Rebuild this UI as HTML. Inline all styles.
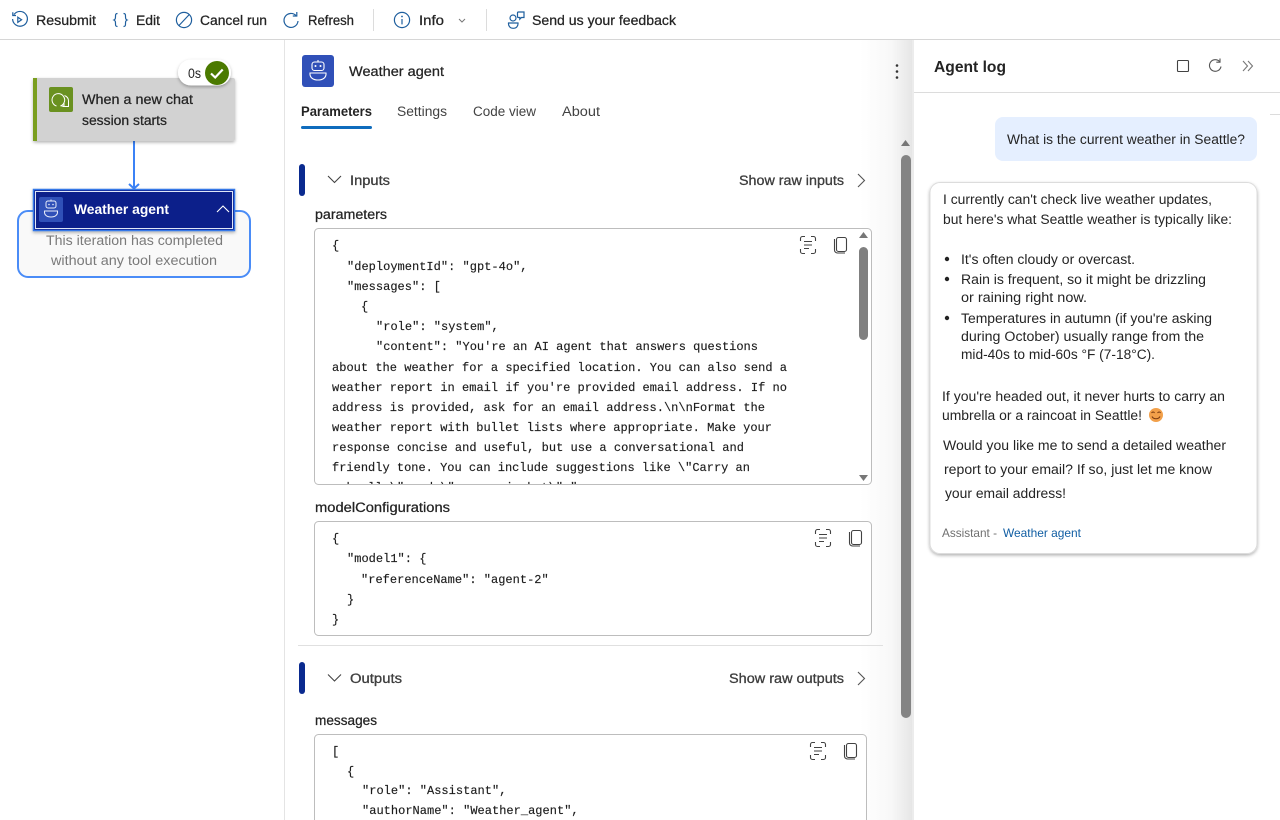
<!DOCTYPE html>
<html><head><meta charset="utf-8"><title>Weather agent</title>
<style>
html,body{margin:0;padding:0;background:#fff;width:1280px;height:820px;overflow:hidden}
svg{display:block}
text{font-family:"Liberation Sans",sans-serif;font-size:13.5px;fill:#242424;white-space:pre}
.m{stroke:#242424;stroke-width:.25px}
.b{font-weight:bold}
.c{font-family:"Liberation Mono",monospace;font-size:12px;fill:#1c1c1c;letter-spacing:.02px;stroke:#1c1c1c;stroke-width:.15px}
.i{fill:none;stroke:#424242;stroke-width:1.1}
.t{fill:none;stroke:#1f5f9e;stroke-width:1.2}
</style></head><body>
<svg width="1280" height="820" viewBox="0 0 1280 820" xmlns="http://www.w3.org/2000/svg">
<defs>
<linearGradient id="g" x1="0" x2="1" y1="0" y2="0"><stop offset="0" stop-color="#fff"/><stop offset=".6" stop-color="#f8f8f8"/><stop offset="1" stop-color="#e6e6e6"/></linearGradient>
<filter id="s" x="-10%" y="-10%" width="120%" height="125%"><feDropShadow dx="0" dy="1.5" stdDeviation="1.5" flood-color="#000" flood-opacity=".3"/></filter>
<clipPath id="c1"><rect x="315" y="229" width="540" height="255"/></clipPath>
</defs>

<!-- toolbar -->
<rect x="0" y="39" width="1280" height="1" fill="#d6d6d6"/>
<rect x="373" y="9" width="1" height="22" fill="#dcdcdc"/><rect x="486" y="9" width="1" height="22" fill="#dcdcdc"/>
<g class="t">
<path d="M14 14.500A7.400 7.400 0 1 1 12.600 19"/><path d="M12.800 12.300v3.200h3.200"/><path d="M17.800 17.200l3.800 2.600-3.800 2.600z"/>
<path d="M117.500 13.500c-2 0-2 1-2 2.800s0 3-1.600 3.700c1.600.7 1.600 1.900 1.600 3.700s0 2.800 2 2.800M123.500 13.500c2 0 2 1 2 2.800s0 3 1.600 3.700c-1.600.7-1.600 1.900-1.600 3.700s0 2.800-2 2.800"/>
<circle cx="184" cy="20" r="7.600"/><path d="M179 25.500L189.200 14.600"/>
<path d="M296 15.500A7 7 0 1 0 298 21"/><path d="M296.800 12v4h-4"/>
<circle cx="402" cy="20" r="7.600"/><path d="M402 19v5.400"/>
<path d="M459 19l3 3 3-3" stroke="#777" stroke-width="1"/>
<circle cx="513" cy="18" r="3"/><path d="M518.500 12h5.500v5.500h-2.500l-1.700 1.700v-1.700h-1.300a1 1 0 0 1-1-1V13a1 1 0 0 1 1-1z"/><path d="M508.500 23h9.500c.3 3.200-1.700 5.300-4.700 5.300s-5.100-2.100-4.800-5.300z"/>
</g>
<circle cx="402" cy="16.500" r=".9" fill="#1f5f9e"/>
<text class="m" x="36" y="25" textLength="60" lengthAdjust="spacingAndGlyphs">Resubmit</text>
<text class="m" x="136" y="25" textLength="24" lengthAdjust="spacingAndGlyphs">Edit</text>
<text class="m" x="200" y="25" textLength="67" lengthAdjust="spacingAndGlyphs">Cancel run</text>
<text class="m" x="308" y="25" textLength="46" lengthAdjust="spacingAndGlyphs">Refresh</text>
<text class="m" x="419" y="25" textLength="25" lengthAdjust="spacingAndGlyphs">Info</text>
<text class="m" x="532" y="25" textLength="144" lengthAdjust="spacingAndGlyphs">Send us your feedback</text>

<!-- left canvas -->
<rect x="284" y="40" width="1" height="780" fill="#e4e4e4"/>
<rect x="18" y="211" width="232" height="66" rx="10" fill="#f9f9f9" stroke="#4a8cf7" stroke-width="2"/>
<path d="M134 141v46" stroke="#3b82f6" stroke-width="2" fill="none"/><path d="M129 184l5 4.500 5-4.500" stroke="#3b82f6" stroke-width="2" fill="none"/>
<rect x="33" y="78" width="202" height="63" rx="2" fill="#d2d2d2" filter="url(#s)"/>
<rect x="33" y="78" width="4" height="63" fill="#7a9e1f"/>
<rect x="49" y="87" width="24" height="25" rx="2" fill="#6a9120"/>
<path d="M56.500 106a6.300 6.300 0 1 1 4-.1l3.500.1v-3.500" fill="none" stroke="#fff" stroke-width="1"/><path d="M64.500 95.500c2.500 1 4 3 4 5.500v5.500h-6" fill="none" stroke="#fff" stroke-width="1"/>
<text class="m" x="82" y="104" textLength="111" lengthAdjust="spacingAndGlyphs">When a new chat</text>
<text class="m" x="82" y="125" textLength="85" lengthAdjust="spacingAndGlyphs">session starts</text>
<rect x="178" y="59.500" width="53" height="26" rx="13" fill="#fff" filter="url(#s)"/>
<text x="188" y="78" textLength="13" lengthAdjust="spacingAndGlyphs">0s</text>
<circle cx="217" cy="73" r="12" fill="#4b7a00"/><path d="M211 73.500l4.200 4 7.500-8" fill="none" stroke="#fff" stroke-width="2.200"/>
<rect x="33.500" y="189.500" width="201" height="41" fill="#0c1f8a" stroke="#3478e8" stroke-width="1.500" filter="url(#s)"/>
<rect x="35.500" y="191.500" width="197" height="37" fill="#0c1f8a" stroke="#dfe6f7" stroke-width="1"/>
<rect x="39" y="197" width="24" height="25" rx="2" fill="#3050b8"/>
<g fill="none" stroke="#e8ecfa" stroke-width="1"><rect x="46" y="201" width="10" height="7" rx="2"/><path d="M51 199.500v1.500M44.500 211h13c.5 4-2.500 6-6.500 6s-7-2-6.500-6z"/></g>
<circle cx="49" cy="204.500" r=".8" fill="#e8ecfa"/><circle cx="53" cy="204.500" r=".8" fill="#e8ecfa"/>
<text class="b" x="74" y="214" textLength="95" lengthAdjust="spacingAndGlyphs" style="fill:#fff">Weather agent</text>
<path d="M217 212l6-6 6 6" fill="none" stroke="#fff" stroke-width="1.100"/>
<text x="46" y="245" textLength="177" lengthAdjust="spacingAndGlyphs" style="fill:#7a7a7a">This iteration has completed</text>
<text x="51" y="265" textLength="166" lengthAdjust="spacingAndGlyphs" style="fill:#7a7a7a">without any tool execution</text>

<!-- middle -->
<rect x="860" y="40" width="52" height="780" fill="url(#g)"/>
<rect x="912" y="40" width="2" height="780" fill="#ececec"/>
<rect x="302" y="55" width="32" height="32" rx="3" fill="#3050b8"/>
<g fill="none" stroke="#fff" stroke-width="1.100"><rect x="312" y="62" width="12" height="8.500" rx="2.500"/><path d="M318 60v2M310 73h16c.5 4.500-3 7-8 7s-8.500-2.500-8-7z"/></g>
<circle cx="315.500" cy="66" r="1" fill="#fff"/><circle cx="320.500" cy="66" r="1" fill="#fff"/>
<text class="m" x="349" y="76" textLength="95" lengthAdjust="spacingAndGlyphs">Weather agent</text>
<circle cx="897" cy="65.500" r="1.300" fill="#333"/><circle cx="897" cy="71.500" r="1.300" fill="#333"/><circle cx="897" cy="77.500" r="1.300" fill="#333"/>
<text class="b" x="301" y="116" textLength="71" lengthAdjust="spacingAndGlyphs">Parameters</text>
<text x="397" y="116" textLength="50" lengthAdjust="spacingAndGlyphs" style="fill:#424242">Settings</text>
<text x="473" y="116" textLength="63" lengthAdjust="spacingAndGlyphs" style="fill:#424242">Code view</text>
<text x="562" y="116" textLength="38" lengthAdjust="spacingAndGlyphs" style="fill:#424242">About</text>
<rect x="301" y="126" width="71" height="3" rx="1.500" fill="#0f6cbd"/>

<rect x="299" y="164" width="6" height="32" rx="3" fill="#0a2a8f"/>
<path d="M328 176l6.500 6.500 6.500-6.500" fill="none" stroke="#424242" stroke-width="1.100"/>
<text class="m" x="350" y="185" textLength="40" lengthAdjust="spacingAndGlyphs" style="fill:#424242">Inputs</text>
<text class="m" x="739" y="185" textLength="105" lengthAdjust="spacingAndGlyphs" style="fill:#424242">Show raw inputs</text>
<path d="M858 174l6.500 6.500-6.500 6.500" fill="none" stroke="#555" stroke-width="1.100"/>
<text class="m" x="315" y="219" textLength="72" lengthAdjust="spacingAndGlyphs">parameters</text>

<rect x="314.500" y="228.500" width="557" height="256" rx="4" fill="#fff" stroke="#bdbdbd"/>
<g clip-path="url(#c1)">
<text class="c" x="332" y="249">{</text>
<text class="c" x="347" y="270">"deploymentId": "gpt-4o",</text>
<text class="c" x="347" y="290">"messages": [</text>
<text class="c" x="361" y="310">{</text>
<text class="c" x="376" y="330">"role": "system",</text>
<text class="c" x="376" y="350" textLength="382">"content": "You're an AI agent that answers questions</text>
<text class="c" x="332" y="371" textLength="455">about the weather for a specified location. You can also send a</text>
<text class="c" x="332" y="391" textLength="455">weather report in email if you're provided email address. If no</text>
<text class="c" x="332" y="411" textLength="433">address is provided, ask for an email address.\n\nFormat the</text>
<text class="c" x="332" y="431" textLength="440">weather report with bullet lists where appropriate. Make your</text>
<text class="c" x="332" y="451" textLength="412">response concise and useful, but use a conversational and</text>
<text class="c" x="332" y="471" textLength="418">friendly tone. You can include suggestions like \"Carry an</text>
<text class="c" x="332" y="491">umbrella\" and \"wear a jacket\".",</text>
</g>
<path d="M863.500 232l4.500 6h-9z" fill="#777"/><rect x="859" y="247" width="9" height="93" rx="4.500" fill="#808080"/><path d="M863.500 481l-4.500-6h9z" fill="#777"/>

<text class="m" x="315" y="512" textLength="135" lengthAdjust="spacingAndGlyphs">modelConfigurations</text>
<rect x="314.500" y="521.500" width="557" height="114" rx="4" fill="#fff" stroke="#bdbdbd"/>
<text class="c" x="332" y="542">{</text>
<text class="c" x="347" y="562">"model1": {</text>
<text class="c" x="361" y="583">"referenceName": "agent-2"</text>
<text class="c" x="347" y="603">}</text>
<text class="c" x="332" y="623">}</text>
<rect x="298" y="645" width="585" height="1" fill="#e0e0e0"/>

<rect x="299" y="662" width="6" height="32" rx="3" fill="#0a2a8f"/>
<path d="M328 674.500l6.500 6.500 6.500-6.500" fill="none" stroke="#424242" stroke-width="1.100"/>
<text class="m" x="350" y="683" textLength="52" lengthAdjust="spacingAndGlyphs" style="fill:#424242">Outputs</text>
<text class="m" x="729" y="683" textLength="115" lengthAdjust="spacingAndGlyphs" style="fill:#424242">Show raw outputs</text>
<path d="M858 672l6.500 6.500-6.500 6.500" fill="none" stroke="#555" stroke-width="1.100"/>
<text class="m" x="315" y="725" textLength="62" lengthAdjust="spacingAndGlyphs">messages</text>
<rect x="314.500" y="734.500" width="552" height="110" rx="4" fill="#fff" stroke="#bdbdbd"/>
<text class="c" x="332" y="755">[</text>
<text class="c" x="347" y="775">{</text>
<text class="c" x="362" y="794">"role": "Assistant",</text>
<text class="c" x="362" y="814">"authorName": "Weather_agent",</text>

<!-- format / copy icons -->
<g class="i"><path d="M800.500 241v-2.500a2 2 0 0 1 2-2h2.500M811 236.500h2.500a2 2 0 0 1 2 2v2.500M815.500 249v2.500a2 2 0 0 1-2 2H811M805 253.500h-2.500a2 2 0 0 1-2-2V249M804 241.500h8M804 245h8M804 248.500h5"/><path d="M834.500 239v11a3 3 0 0 0 3 3h7.500"/><rect x="836.500" y="237.500" width="10" height="14" rx="2"/></g>
<g class="i" transform="translate(15 293)"><path d="M800.500 241v-2.500a2 2 0 0 1 2-2h2.500M811 236.500h2.500a2 2 0 0 1 2 2v2.500M815.500 249v2.500a2 2 0 0 1-2 2H811M805 253.500h-2.500a2 2 0 0 1-2-2V249M804 241.500h8M804 245h8M804 248.500h5"/><path d="M834.500 239v11a3 3 0 0 0 3 3h7.500"/><rect x="836.500" y="237.500" width="10" height="14" rx="2"/></g>
<g class="i" transform="translate(10 506)"><path d="M800.500 241v-2.500a2 2 0 0 1 2-2h2.500M811 236.500h2.500a2 2 0 0 1 2 2v2.500M815.500 249v2.500a2 2 0 0 1-2 2H811M805 253.500h-2.500a2 2 0 0 1-2-2V249M804 241.500h8M804 245h8M804 248.500h5"/><path d="M834.500 239v11a3 3 0 0 0 3 3h7.500"/><rect x="836.500" y="237.500" width="10" height="14" rx="2"/></g>

<!-- main scrollbar -->
<path d="M905.500 140l4.500 6h-9z" fill="#777"/><rect x="901" y="155" width="10" height="563" rx="5" fill="#848484"/>

<!-- right panel -->
<rect x="914" y="92" width="366" height="1" fill="#dcdcdc"/>
<rect x="1270" y="114" width="10" height="1" fill="#dcdcdc"/>
<text class="b" x="934" y="72" textLength="72" lengthAdjust="spacingAndGlyphs" style="font-size:16px">Agent log</text>
<rect x="1177.500" y="60.500" width="11" height="11" rx="1" fill="none" stroke="#424242" stroke-width="1.100"/>
<g fill="none" stroke="#555" stroke-width="1.100"><path d="M1219.500 61.500a5.800 5.800 0 1 0 1.500 5"/><path d="M1220 58.500v3.700h-3.700"/></g>
<path d="M1243 61l4.500 5-4.500 5M1248 61l4.500 5-4.500 5" fill="none" stroke="#777" stroke-width="1.100"/>
<rect x="995" y="117" width="262" height="44" rx="8" fill="#e5efff"/>
<text x="1007" y="144" textLength="238" lengthAdjust="spacingAndGlyphs">What is the current weather in Seattle?</text>
<rect x="930" y="182.500" width="327" height="371" rx="10" fill="#fff" stroke="#dcdcdc" filter="url(#s)"/>
<text x="943" y="204" textLength="269" lengthAdjust="spacingAndGlyphs">I currently can't check live weather updates,</text>
<text x="943" y="224" textLength="289" lengthAdjust="spacingAndGlyphs">but here's what Seattle weather is typically like:</text>
<circle cx="947" cy="259" r="2.200" fill="#222"/><circle cx="947" cy="279" r="2.200" fill="#222"/><circle cx="947" cy="318" r="2.200" fill="#222"/>
<text x="961" y="264" textLength="174" lengthAdjust="spacingAndGlyphs">It's often cloudy or overcast.</text>
<text x="961" y="284" textLength="245" lengthAdjust="spacingAndGlyphs">Rain is frequent, so it might be drizzling</text>
<text x="961" y="302" textLength="126" lengthAdjust="spacingAndGlyphs">or raining right now.</text>
<text x="961" y="323" textLength="251" lengthAdjust="spacingAndGlyphs">Temperatures in autumn (if you're asking</text>
<text x="961" y="341" textLength="243" lengthAdjust="spacingAndGlyphs">during October) usually range from the</text>
<text x="961" y="359" textLength="194" lengthAdjust="spacingAndGlyphs">mid-40s to mid-60s °F (7-18°C).</text>
<text x="942" y="401" textLength="283" lengthAdjust="spacingAndGlyphs">If you're headed out, it never hurts to carry an</text>
<text x="942" y="420" textLength="200" lengthAdjust="spacingAndGlyphs">umbrella or a raincoat in Seattle!</text>
<circle cx="1156" cy="415" r="7" fill="#f2a04a"/><path d="M1151.500 413c1-1.300 2.300-1.300 3 0M1157.500 413c1-1.300 2.300-1.300 3 0" fill="none" stroke="#7a3a10" stroke-width="1"/><path d="M1152 416.500c1.500 3 6.500 3 8 0" fill="none" stroke="#7a3a10" stroke-width="1.100"/>
<text x="943" y="450" textLength="283" lengthAdjust="spacingAndGlyphs">Would you like me to send a detailed weather</text>
<text x="944" y="474" textLength="268" lengthAdjust="spacingAndGlyphs">report to your email? If so, just let me know</text>
<text x="945" y="498" textLength="121" lengthAdjust="spacingAndGlyphs">your email address!</text>
<text x="942" y="537" textLength="55" lengthAdjust="spacingAndGlyphs" style="font-size:12px;fill:#707070">Assistant -</text>
<text x="1003" y="537" textLength="78" lengthAdjust="spacingAndGlyphs" style="font-size:12px;fill:#115ea3">Weather agent</text>
</svg>
</body></html>
